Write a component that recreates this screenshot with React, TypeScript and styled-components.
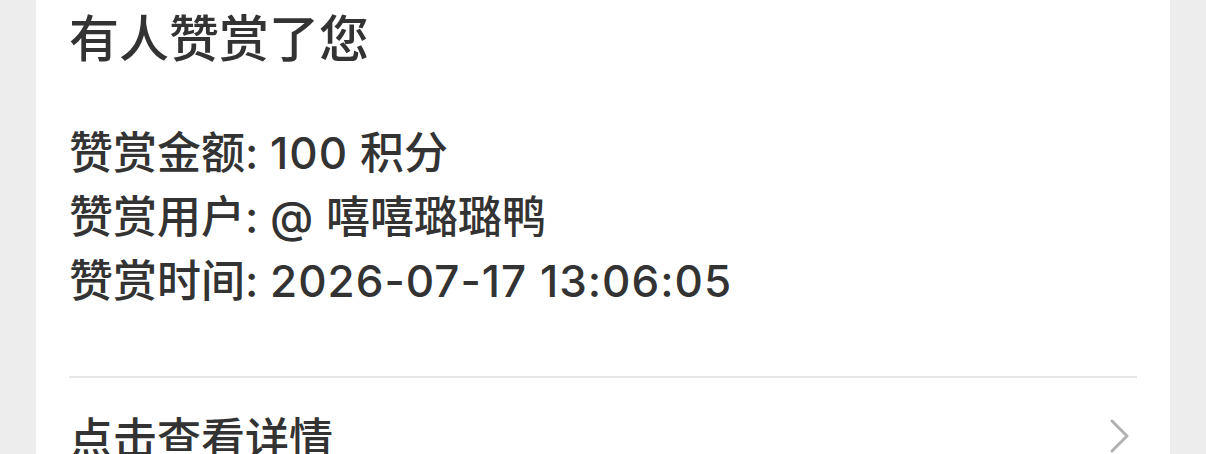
import styled, { createGlobalStyle } from "styled-components";

const GlobalStyle = createGlobalStyle`
    body {
        margin: 0;
        background: #ededed;
        font-family: Inter, "Noto Sans CJK SC", sans-serif;
        -webkit-font-smoothing: antialiased;
    }
`;

const Page = styled.div`
    padding: 0 36px;
    height: 454px;
    overflow: hidden;
`;

const Card = styled.div`
    background: #ffffff;
    padding: 4px 33px 0 33px;
    min-height: 100%;
    box-sizing: border-box;
`;

const Title = styled.h1`
    margin: 0;
    font-size: 50px;
    line-height: 70px;
    font-weight: 500;
    color: #333333;
`;

const Details = styled.div`
    margin-top: 47px;
    padding-bottom: 63px;
    border-bottom: 2px solid #e6e6e6;
`;

const DetailLine = styled.div`
    font-size: 44px;
    line-height: 64px;
    font-weight: 500;
    color: #333333;
    white-space: nowrap;
`;

const Latin = styled.span`
    letter-spacing: 1px;
`;

const LinkRow = styled.div`
    display: flex;
    align-items: center;
    justify-content: space-between;
    height: 116px;
`;

const LinkText = styled.span`
    font-size: 44px;
    font-weight: 500;
    color: #333333;
`;

const Chevron = styled.svg`
    width: 22px;
    height: 36px;
    margin-right: 6px;
`;

const lines = [
    { label: "赞赏金额:", value: "100", unit: " 积分" },
    { label: "赞赏用户:", value: "@", unit: " 嘻嘻璐璐鸭" },
    { label: "赞赏时间:", value: "2026-07-17 13:06:05", unit: "" },
];

const App = () => {
    return (
        <>
            <GlobalStyle />
            <Page>
                <Card>
                    <Title>有人赞赏了您</Title>
                    <Details>
                        {lines.map((line) => (
                            <DetailLine key={line.label}>
                                {line.label} <Latin>{line.value}</Latin>
                                {line.unit}
                            </DetailLine>
                        ))}
                    </Details>
                    <LinkRow>
                        <LinkText>点击查看详情</LinkText>
                        <Chevron viewBox="0 0 22 36" fill="none">
                            <path
                                d="M3 3 L18 18 L3 33"
                                stroke="#b2b2b2"
                                strokeWidth="3"
                                strokeLinecap="round"
                                strokeLinejoin="round"
                            />
                        </Chevron>
                    </LinkRow>
                </Card>
            </Page>
        </>
    );
};

export default App;
